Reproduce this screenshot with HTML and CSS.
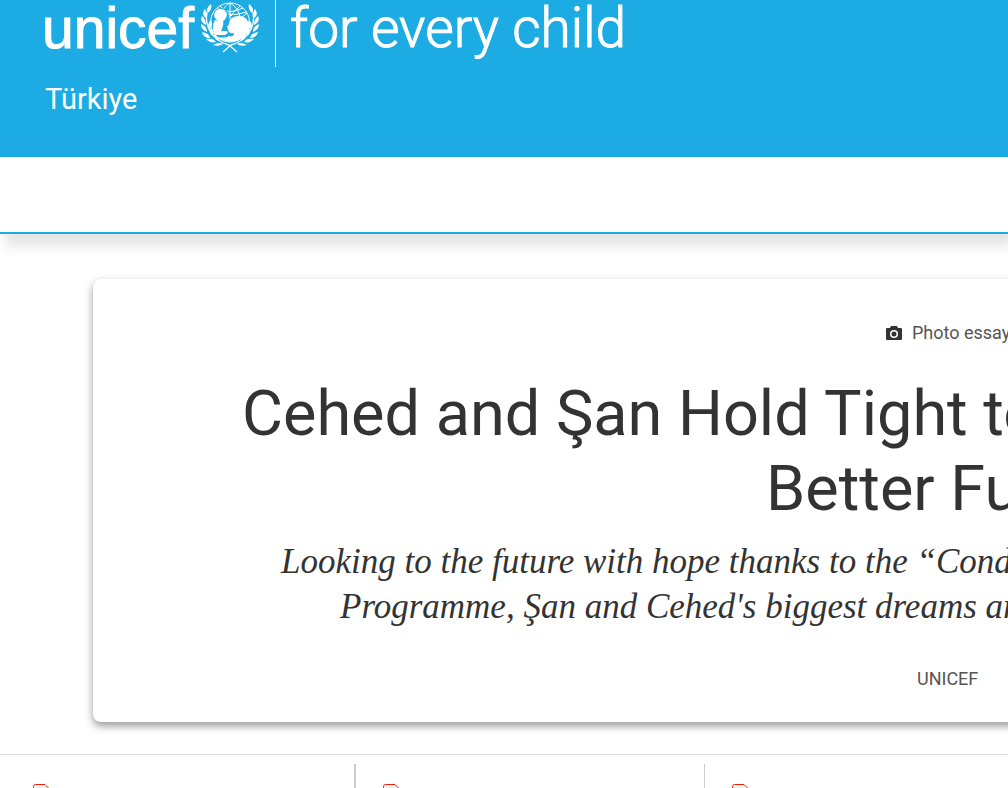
FILE: index.html
```html
<!DOCTYPE html>
<html lang="en">
<head>
<meta charset="utf-8">
<title>UNICEF Türkiye</title>
<link rel="stylesheet" href="styles.css">
</head>
<body>
<header class="masthead">
  <a class="brand" href="#">
    <span class="wordmark">unicef</span>
    <svg class="emblem" viewBox="0 0 60 54" aria-hidden="true">
      <g fill="none" stroke="#fff" stroke-width="1">
        <circle cx="30" cy="22.500" r="19.500"/>
        <path d="M30 3v16M30 3c-6 3-8 8-8 14M30 3c7 4 9 9 10 14M17 8q13 7 26 0M24 14q12 2 23-2M20 6l12 10M40 6L28 18M47 13l-6 5"/>
      </g>
      <path fill="#1cabe2" d="M13 18c0-7 3-10 8-10s8 4 8 10l2 5-5 11-12-2z"/>
      <circle cx="20.500" cy="15" r="6.300" fill="#fff"/>
      <path fill="#fff" d="M15 20q5 2 8 0c1 3 0 7-2 11l6 0 1 2-3 2-9 0c-4-3-4-10-1-15z"/>
      <path fill="#fff" d="M29 24c0-5 4-8 10-8 7 0 10 5 10 11 0 4-2 7-4 9-6 7-21 8-30 0 5 2 10 2 14 0 3 1 5 0 5-3-4 1-6-1-6-4l-1-2z"/>
      <g id="laurel" fill="#fff">
        <path d="M11 4c-4 3-5 6-3 9 3-3 4-6 3-9zM5 9c-3 4-2 7 1 9 1-3 1-6-1-9zM2 16c-2 4 0 7 4 9 0-4-1-6-4-9zM1 24c0 4 2 6 6 8 0-4-2-6-6-8zM2 32c1 4 4 6 8 6-1-4-4-5-8-6zM6 39c3 3 6 4 10 3-2-3-5-4-10-3zM13 45c4 1 7 1 10-1-3-2-6-1-10 1zM11 20c-3 3-4 6-1 9 2-3 3-6 1-9zM11 28c-2 3-1 6 2 8 1-3 0-6-2-8zM14 34c0 4 2 6 5 7 0-3-2-5-5-7z"/>
        <path fill="none" stroke="#fff" stroke-width="1.3" d="M7 12C4 28 14 41 29 45l8 7"/>
      </g>
      <use href="#laurel" transform="matrix(-1 0 0 1 60 0)"/>
    </svg>
    <span class="tagline">for every child</span>
  </a>
  <a class="country" href="#">Türkiye</a>
</header>
<nav class="navbar" aria-label="Main"></nav>
<main>
  <article class="card">
    <p class="kind">
      <svg class="camera" viewBox="0 0 16 14" aria-hidden="true"><path fill="#333" fill-rule="evenodd" d="M5 0h6l1 2h3q1 0 1 1v10q0 1-1 1H1q-1 0-1-1V3q0-1 1-1h3zM8 4a4 4 0 1 0 0 8 4 4 0 0 0 0-8zm0 1.500a2.500 2.500 0 1 1 0 5 2.500 2.500 0 0 1 0-5z"/></svg>
      <span>Photo essay</span>
    </p>
    <h1 class="title">
      <span class="title-first">Cehed and Şan Hold Tight to</span>
      <span class="title-second">Better Future</span>
    </h1>
    <p class="lead">
      <span class="lead-first">Looking to the future with hope thanks to the “Conditional</span>
      <span class="lead-second">Programme, Şan and Cehed's biggest dreams are</span>
    </p>
    <p class="author">UNICEF</p>
  </article>
</main>
<section class="files" aria-label="Files">
  <div class="file"><svg class="pdf" viewBox="0 0 18 24" aria-hidden="true"><path d="M.5 23V2.500q0-2 2-2H12l5 5V23z"/></svg></div>
  <div class="file"><svg class="pdf" viewBox="0 0 18 24" aria-hidden="true"><path d="M.5 23V2.500q0-2 2-2H12l5 5V23z"/></svg></div>
  <div class="file"><svg class="pdf" viewBox="0 0 18 24" aria-hidden="true"><path d="M.5 23V2.500q0-2 2-2H12l5 5V23z"/></svg></div>
</section>
</body>
</html>
```
FILE: styles.css
```css
* { box-sizing: border-box; }
body {
  margin: 0;
  height: 100vh;
  overflow: hidden;
  display: flex;
  flex-direction: column;
  background: #fff;
  color: #333;
  font-family: Roboto, sans-serif;
}
h1, p { margin: 0; font-weight: 400; }
a { color: #fff; text-decoration: none; }

.masthead {
  flex: none;
  padding: 0 44px 40px 42px;
  background: #1cabe2;
}
.brand { display: flex; height: 67px; white-space: nowrap; }
.wordmark {
  width: 158px;
  font: 57px/56px "Liberation Sans", sans-serif;
  -webkit-text-stroke: 1px #fff;
}
.emblem { flex: none; width: 60px; height: 54px; }
.tagline {
  margin-left: 15px;
  padding-left: 14px;
  border-left: 1px solid #fff;
  font-size: 55px;
  font-weight: 300;
  line-height: 57px;
  -webkit-text-stroke: 1px #fff;
}
.country {
  display: block;
  padding: 14px 3px 0;
  font-size: 29px;
  line-height: 36px;
}

.navbar {
  flex: none;
  height: 77px;
  border-bottom: 2px solid #1cabe2;
  box-shadow: 5px 12px 12px rgba(0, 0, 0, 0.11);
}

.card {
  margin: 45px -100px 32px 93px;
  padding: 40px 0 28px;
  border-radius: 8px;
  background: #fff;
  box-shadow: 0 4px 8px rgba(0, 0, 0, 0.4);
  white-space: nowrap;
}
.kind {
  display: flex;
  align-items: center;
  gap: 10px;
  padding-left: 793px;
  color: #555;
  font-size: 18px;
  line-height: 28px;
}
.camera { width: 16px; height: 14px; }
.title {
  padding-top: 29px;
  font-size: 63px;
  line-height: 75px;
}
.title span, .lead span { display: block; }
.title-first { padding-left: 149px; }
.title-second { padding-left: 673px; }
.lead {
  padding-top: 13px;
  font: italic 35px/45px "Liberation Serif", serif;
}
.lead-first { padding-left: 188px; }
.lead-second { padding-left: 247px; }
.author {
  padding: 36px 0 1px 824px;
  color: #555;
  font-size: 18px;
  line-height: 28px;
}

.files {
  flex: 1;
  display: flex;
  padding-top: 9px;
  border-top: 1px solid #ddd;
}
.file {
  flex: 0 0 350px;
  padding: 20px 0 0 27px;
  border-left: 1px solid #ccc;
}
.file:first-child { flex-basis: 354px; padding-left: 33px; border-left: 0; }
.file:nth-child(2) { border-left-width: 2px; }
.pdf { display: block; width: 18px; height: 24px; }
.pdf path { fill: #f5f5f5; stroke: #f21b0c; stroke-width: 1px; }
```
